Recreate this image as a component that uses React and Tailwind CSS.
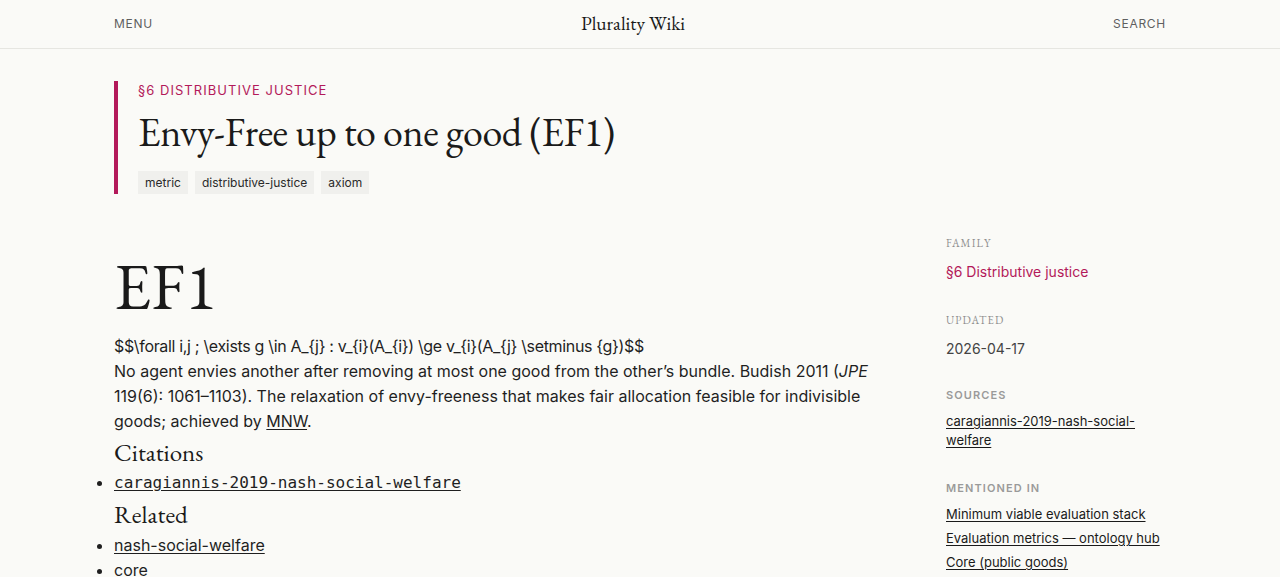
import React from 'react';

const serif = "font-['EB_Garamond','Liberation_Serif',serif]";
const sans = "font-['Inter','Liberation_Sans',sans-serif]";
const mono = "font-['DejaVu_Sans_Mono','Liberation_Mono',monospace]";

const tags = ['metric', 'distributive-justice', 'axiom'];

const mentions = [
  'Minimum viable evaluation stack',
  'Evaluation metrics — ontology hub',
  'Core (public goods)',
];

function Header() {
  return (
    <header className="border-b border-[#e6e6e1]">
      <div className="mx-auto w-[1052px] h-12 flex items-center justify-between">
        <span className={`${sans} text-[12px] tracking-[0.06em] text-[#5f5f5f]`}>MENU</span>
        <span className={`${serif} text-[19.5px] text-[#1a1a1a]`}>Plurality Wiki</span>
        <span className={`${sans} text-[12px] tracking-[0.06em] text-[#5f5f5f]`}>SEARCH</span>
      </div>
    </header>
  );
}

function TitleBlock() {
  return (
    <div className="mt-8 border-l-4 border-[#b3195a] pl-5">
      <div className={`${sans} text-[13px] leading-[18px] tracking-[0.08em] text-[#b3195a]`}>§6 DISTRIBUTIVE JUSTICE</div>
      <h1 className={`${serif} mt-[10px] text-[40px] leading-[46px] tracking-[-0.01em] text-[#1a1a1a]`}>Envy-Free up to one good (EF1)</h1>
      <div className="mt-[16px] flex gap-[7px]">
        {tags.map((t) => (
          <span key={t} className={`${sans} bg-[#f0f0ed] px-[7px] h-[23px] flex items-center text-[12px] text-[#2a2a2a]`}>{t}</span>
        ))}
      </div>
    </div>
  );
}

function SideLabel({ children, kind }) {
  // serif caps for the first two groups, bold sans for the rest
  return kind === 'serif' ? (
    <div className={`${serif} text-[11px] leading-[14px] tracking-[0.1em] text-[#8f8f8f]`}>{children}</div>
  ) : (
    <div className={`${sans} text-[11px] leading-[14px] font-semibold tracking-[0.1em] text-[#9a9a9a]`}>{children}</div>
  );
}

function Sidebar() {
  return (
    <aside className={`${sans} pt-[1px]`}>
      <SideLabel kind="serif">FAMILY</SideLabel>
      <a className="block mt-[15px] text-[14px] leading-[14px] text-[#b3195a]">§6 Distributive justice</a>

      <div className="mt-[34px]"><SideLabel kind="serif">UPDATED</SideLabel></div>
      <div className="mt-[15px] text-[14px] leading-[14px] text-[#444]">2026-04-17</div>

      <div className="mt-[32px]"><SideLabel>SOURCES</SideLabel></div>
      <a className="block mt-[10px] text-[13px] leading-[19px] text-[#1a1a1a] underline underline-offset-2 w-[200px]">caragiannis-2019-nash-social-welfare</a>

      <div className="mt-[31px]"><SideLabel>MENTIONED IN</SideLabel></div>
      <ul className="mt-[10px] flex flex-col gap-[5px]">
        {mentions.map((m) => (
          <li key={m} className="text-[13px] leading-[19px] text-[#1a1a1a] underline underline-offset-2">{m}</li>
        ))}
      </ul>
    </aside>
  );
}

function Article() {
  return (
    <article className={`${sans} text-[16px] leading-[25px] text-[#1f1f1f]`}>
      <h2 className={`${serif} text-[66px] leading-[76px] text-[#1a1a1a] mt-[13px]`}>EF1</h2>
      <p className="mt-[10px] tracking-[-0.021em]">{'$$\\forall i,j ; \\exists g \\in A_{j} : v_{i}(A_{i}) \\ge v_{i}(A_{j} \\setminus {g})$$'}</p>
      <p>
        No agent envies another after removing at most one good from the other’s bundle. Budish 2011 (<em>JPE</em> 119(6): 1061–1103). The relaxation of envy-freeness that makes fair allocation feasible for indivisible goods; achieved by <a className="underline underline-offset-2">MNW</a>.
      </p>
      <h3 className={`${serif} text-[25px] leading-[36px] text-[#1a1a1a]`}>Citations</h3>
      <ul className="list-disc">
        <li><a className={`${mono} text-[16px] underline underline-offset-2`}>caragiannis-2019-nash-social-welfare</a></li>
      </ul>
      <h3 className={`${serif} text-[25px] leading-[38px] text-[#1a1a1a]`}>Related</h3>
      <ul className="list-disc">
        <li><a className="underline underline-offset-2">nash-social-welfare</a></li>
        <li>core</li>
      </ul>
    </article>
  );
}

export default function App() {
  return (
    <div className="min-h-screen bg-[#fafaf7]">
      <Header />
      <main className="mx-auto w-[1052px]">
        <TitleBlock />
        <div className="mt-[41px] grid grid-cols-[1fr_220px] gap-[76px]">
          <Article />
          <Sidebar />
        </div>
      </main>
    </div>
  );
}
